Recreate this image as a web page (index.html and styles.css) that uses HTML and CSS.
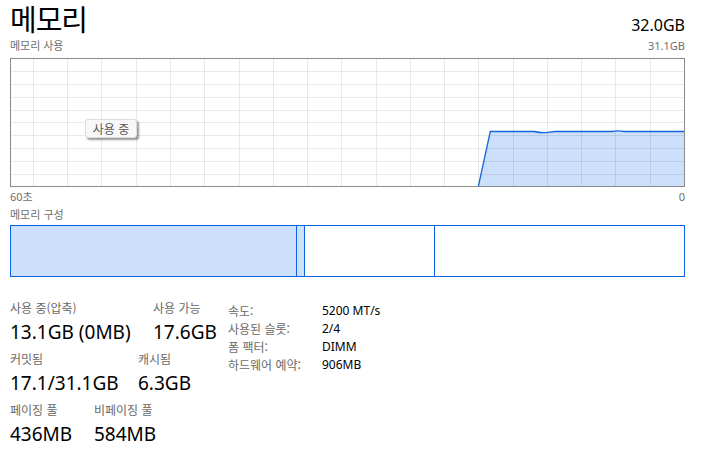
FILE: index.html
```html
<!DOCTYPE html>
<html lang="ko">
<head>
<meta charset="utf-8">
<title>메모리</title>
<link rel="stylesheet" href="styles.css">
</head>
<body>
<div class="page">
  <header class="header">
    <h1 class="title">메모리</h1>
    <div class="total">32.0GB</div>
  </header>
  <div class="sub-row">
    <span>메모리 사용</span>
    <span>31.1GB</span>
  </div>
  <div class="chart-wrap">
    <svg class="chart" width="675" height="129" viewBox="0 0 675 129" xmlns="http://www.w3.org/2000/svg">
      <rect x="0" y="0" width="675" height="129" fill="#ffffff"/>
      <path d="M468.3 128.5 L480.3 73.5 L524 73.5 Q531 75.2 538 74.4 L545 73.5 L602 73.5 Q608 72.4 614 73.5 L674 73.5 L674 128.5 Z" fill="#cce0fc"/>
      <g stroke="rgba(0,0,0,0.085)" stroke-width="1">
        <line x1="23.5" y1="0" x2="23.5" y2="129"/>
        <line x1="57.5" y1="0" x2="57.5" y2="129"/>
        <line x1="91.5" y1="0" x2="91.5" y2="129"/>
        <line x1="126.5" y1="0" x2="126.5" y2="129"/>
        <line x1="160.5" y1="0" x2="160.5" y2="129"/>
        <line x1="194.5" y1="0" x2="194.5" y2="129"/>
        <line x1="229.5" y1="0" x2="229.5" y2="129"/>
        <line x1="263.5" y1="0" x2="263.5" y2="129"/>
        <line x1="297.5" y1="0" x2="297.5" y2="129"/>
        <line x1="331.5" y1="0" x2="331.5" y2="129"/>
        <line x1="366.5" y1="0" x2="366.5" y2="129"/>
        <line x1="400.5" y1="0" x2="400.5" y2="129"/>
        <line x1="434.5" y1="0" x2="434.5" y2="129"/>
        <line x1="468.5" y1="0" x2="468.5" y2="129"/>
        <line x1="503.5" y1="0" x2="503.5" y2="129"/>
        <line x1="537.5" y1="0" x2="537.5" y2="129"/>
        <line x1="571.5" y1="0" x2="571.5" y2="129"/>
        <line x1="605.5" y1="0" x2="605.5" y2="129"/>
        <line x1="640.5" y1="0" x2="640.5" y2="129"/>
        <line x1="0" y1="13.5" x2="675" y2="13.5"/>
        <line x1="0" y1="26.5" x2="675" y2="26.5"/>
        <line x1="0" y1="39.5" x2="675" y2="39.5"/>
        <line x1="0" y1="52.5" x2="675" y2="52.5"/>
        <line x1="0" y1="64.5" x2="675" y2="64.5"/>
        <line x1="0" y1="77.5" x2="675" y2="77.5"/>
        <line x1="0" y1="90.5" x2="675" y2="90.5"/>
        <line x1="0" y1="103.5" x2="675" y2="103.5"/>
        <line x1="0" y1="116.5" x2="675" y2="116.5"/>
      </g>
      <path d="M468.3 128.5 L480.3 73.5 L524 73.5 Q531 75.2 538 74.4 L545 73.5 L602 73.5 Q608 72.4 614 73.5 L674 73.5" fill="none" stroke="#1766dc" stroke-width="1.3"/>
      <rect x="0.5" y="0.5" width="674" height="128" fill="none" stroke="#8a8a8a" stroke-width="1"/>
    </svg>
    <div class="tooltip">사용 중</div>
  </div>
  <div class="axis-row">
    <span>60초</span>
    <span>0</span>
  </div>
  <div class="section-label">메모리 구성</div>
  <div class="composition">
    <div class="seg seg-used"></div>
    <div class="seg seg-modified"></div>
    <div class="seg seg-standby"></div>
    <div class="seg seg-free"></div>
  </div>
  <div class="stats">
    <div class="stats-left">
      <div class="stat-row row-1">
        <div class="stat stat-a">
          <div class="stat-label">사용 중(압축)</div>
          <div class="stat-value">13.1GB (0MB)</div>
        </div>
        <div class="stat">
          <div class="stat-label">사용 가능</div>
          <div class="stat-value">17.6GB</div>
        </div>
      </div>
      <div class="stat-row row-2">
        <div class="stat stat-b">
          <div class="stat-label">커밋됨</div>
          <div class="stat-value">17.1/31.1GB</div>
        </div>
        <div class="stat">
          <div class="stat-label">캐시됨</div>
          <div class="stat-value">6.3GB</div>
        </div>
      </div>
      <div class="stat-row row-3">
        <div class="stat stat-c">
          <div class="stat-label">페이징 풀</div>
          <div class="stat-value">436MB</div>
        </div>
        <div class="stat">
          <div class="stat-label">비페이징 풀</div>
          <div class="stat-value">584MB</div>
        </div>
      </div>
    </div>
    <dl class="details">
      <dt>속도:</dt><dd>5200 MT/s</dd>
      <dt>사용된 슬롯:</dt><dd>2/4</dd>
      <dt>폼 팩터:</dt><dd>DIMM</dd>
      <dt>하드웨어 예약:</dt><dd>906MB</dd>
    </dl>
  </div>
</div>
</body>
</html>
```

FILE: styles.css
```css
* {
  box-sizing: border-box;
}

html, body {
  margin: 0;
  padding: 0;
  background: #ffffff;
}

body {
  font-family: "Noto Sans", "Noto Sans CJK KR", sans-serif;
  color: #000000;
}

.page {
  width: 704px;
  padding: 0 19px 0 10px;
}

.header {
  display: flex;
  justify-content: space-between;
  align-items: baseline;
  height: 38px;
}

.title {
  margin: 0;
  font-family: "Noto Sans CJK KR", sans-serif;
  font-weight: 400;
  font-size: 29px;
  line-height: 36px;
  letter-spacing: -1px;
}

.total {
  font-size: 16px;
  line-height: 20px;
}

.sub-row,
.axis-row {
  display: flex;
  justify-content: space-between;
  font-family: "Noto Sans", "Noto Sans CJK KR", sans-serif;
  font-size: 11px;
  line-height: 16px;
  color: #707070;
}

.sub-row {
  height: 20px;
}

.chart-wrap {
  position: relative;
  width: 675px;
  height: 129px;
}

.chart {
  display: block;
}

.tooltip {
  position: absolute;
  left: 75px;
  top: 61px;
  width: 52px;
  height: 19px;
  background: #f8f8f8;
  border: 1px solid #dcdcdc;
  border-radius: 3px;
  box-shadow: 2px 2px 2px rgba(0, 0, 0, 0.4);
  font-family: "Noto Sans CJK KR", sans-serif;
  font-size: 12px;
  line-height: 17px;
  color: #555555;
  text-align: center;
}

.axis-row {
  height: 17px;
  margin-top: 2px;
}

.section-label {
  font-family: "Noto Sans CJK KR", sans-serif;
  font-size: 11px;
  line-height: 16px;
  color: #707070;
  height: 19px;
}

.composition {
  display: flex;
  width: 675px;
  height: 52px;
  border: 1px solid #0b62e4;
}

.seg {
  height: 100%;
  border-right: 1px solid #0b62e4;
}

.seg-used {
  width: 286px;
  background: #cce0fc;
}

.seg-modified {
  width: 8px;
  background: #cce0fc;
}

.seg-standby {
  width: 130px;
}

.seg-free {
  flex: 1;
  border-right: none;
}

.stats {
  display: flex;
  margin-top: 23px;
}

.stats-left {
  width: 218px;
}

.stat-row {
  display: flex;
  margin-bottom: 7px;
}

.stat-a {
  width: 143px;
}

.stat-b {
  width: 128px;
}

.stat-c {
  width: 84px;
}

.stat-label {
  font-family: "Noto Sans CJK KR", sans-serif;
  font-size: 12px;
  line-height: 16px;
  color: #6a6a6a;
  height: 20px;
}

.stat-value {
  font-size: 19px;
  line-height: 24px;
  color: #000000;
}

.details {
  display: grid;
  grid-template-columns: 94px auto;
  grid-auto-rows: 18px;
  margin: 2px 0 0 0;
  font-size: 12px;
  line-height: 18px;
  align-content: start;
}

.details dt {
  font-family: "Noto Sans CJK KR", sans-serif;
  color: #6a6a6a;
}

.details dd {
  margin: 0;
  color: #000000;
}
```
